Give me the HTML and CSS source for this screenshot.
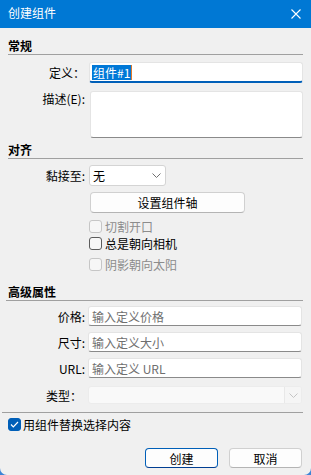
FILE: index.html
```html
<!DOCTYPE html>
<html lang="zh-CN">
<head>
<meta charset="utf-8">
<title>创建组件</title>
<link rel="stylesheet" href="styles.css">
</head>
<body>
<div class="window">
  <div class="titlebar">
    <span class="title">创建组件</span>
    <svg class="close" width="10" height="10" viewBox="0 0 10 10"><path d="M0.5 0.5 L9.5 9.5 M9.5 0.5 L0.5 9.5" stroke="#fff" stroke-width="1.1" fill="none"/></svg>
  </div>
  <div class="content">
    <h2 class="group-title g1">常规</h2>
    <div class="row m7">
      <label class="lbl">定义：</label>
      <div class="input focused h21"><span class="sel">组件#1</span><span class="caret"></span></div>
    </div>
    <div class="row m8 top">
      <label class="lbl lbl-top">描述(E):</label>
      <div class="input textarea"></div>
    </div>

    <h2 class="group-title g2">对齐</h2>
    <div class="row m6">
      <label class="lbl">黏接至:</label>
      <div class="select h21 w77"><span>无</span>
        <svg class="chev" width="9" height="5" viewBox="0 0 9 5"><path d="M0.5 0.5 L4.5 4.5 L8.5 0.5" stroke="#707070" fill="none"/></svg>
      </div>
    </div>
    <div class="row m6">
      <span></span>
      <button class="btn axis">设置组件轴</button>
    </div>
    <div class="checks">
      <div class="check disabled"><span class="box"></span><span>切割开口</span></div>
      <div class="check"><span class="box"></span><span>总是朝向相机</span></div>
      <div class="check disabled m4"><span class="box"></span><span>阴影朝向太阳</span></div>
    </div>

    <h2 class="group-title g3">高级属性</h2>
    <div class="row m5">
      <label class="lbl">价格:</label>
      <div class="input h20 adv"><span class="ph">输入定义价格</span></div>
    </div>
    <div class="row m6">
      <label class="lbl">尺寸:</label>
      <div class="input h20 adv"><span class="ph">输入定义大小</span></div>
    </div>
    <div class="row m6">
      <label class="lbl">URL:</label>
      <div class="input h20 adv"><span class="ph">输入定义 URL</span></div>
    </div>
    <div class="row m8">
      <label class="lbl lbl-type">类型：</label>
      <div class="select disabled-select adv">
        <span></span>
        <span class="arrow-box"><svg width="9" height="5" viewBox="0 0 9 5"><path d="M0.5 0.5 L4.5 4.5 L8.5 0.5" stroke="#c4c4c4" fill="none"/></svg></span>
      </div>
    </div>
    <div class="divider"></div>
    <div class="check checked replace"><span class="box"><svg width="9" height="7" viewBox="0 0 9 7"><path d="M1 3.5 L3.3 5.8 L8 1" stroke="#fff" stroke-width="1.2" fill="none"/></svg></span><span>用组件替换选择内容</span></div>
    <div class="actions">
      <button class="btn action primary">创建</button>
      <button class="btn action">取消</button>
    </div>
  </div>
</div>
</body>
</html>
```
FILE: styles.css
```css
html, body {
  margin: 0;
  padding: 0;
}
body {
  background: #3d84d6;
  font-family: "Noto Sans CJK SC", "Microsoft YaHei", sans-serif;
  font-size: 12px;
  color: #000;
}
.window {
  width: 311px;
  height: 475px;
  background: #f0f0f0;
  border-bottom-left-radius: 7px;
  border-bottom-right-radius: 7px;
  overflow: hidden;
  display: flex;
  flex-direction: column;
}
.titlebar {
  height: 28px;
  flex: none;
  background: #0078d4;
  color: #fff;
  display: flex;
  align-items: center;
  justify-content: space-between;
  padding: 0 10px 3px 8px;
  box-sizing: border-box;
  line-height: 16px;
}
.close {
  display: block;
  margin-top: 2px;
}
.content {
  padding: 0 8px;
  display: flex;
  flex-direction: column;
}
.group-title {
  margin: 0;
  font-size: 12px;
  font-weight: bold;
  line-height: 17px;
  height: 17px;
  border-bottom: 1px solid #a0a0a0;
}
.g1 { margin-top: 9px; }
.g2 { margin-top: 3px; }
.g3 { margin-top: 10px; margin-left: -2px; padding-left: 2px; }

.row {
  display: grid;
  grid-template-columns: 77px 1fr;
  column-gap: 4px;
  align-items: center;
}
.row.top { align-items: start; }
.m4 { margin-top: 4px; }
.m5 { margin-top: 5px; }
.m6 { margin-top: 6px; }
.m7 { margin-top: 7px; }
.m8 { margin-top: 8px; }

.lbl {
  text-align: right;
  line-height: 17px;
  white-space: nowrap;
}
.lbl-top { padding-top: 0; line-height: 16px; }
.lbl-type { padding-right: 3px; }

.input {
  background: #fff;
  border: 1px solid #e4e4e4;
  border-bottom-color: #8a8a8a;
  border-radius: 3px;
  box-sizing: border-box;
  display: flex;
  align-items: center;
  padding-left: 2px;
}
.h21 { height: 21px; }
.h20 { height: 20px; }
.adv { margin-left: -1px; margin-right: 1px; }
.input.focused {
  border-bottom: 2px solid #005fb8;
  padding-bottom: 0;
}
.sel {
  background: #0078d7;
  color: #fff;
  line-height: 15px;
  padding: 0 1px;
}
.caret {
  width: 1px;
  height: 15px;
  background: #e07a2c;
}
.textarea {
  height: 47px;
  margin-left: 1px;
}
.ph {
  color: #6f6f6f;
  padding-left: 1px;
  line-height: 17px;
}

.select {
  background: #fff;
  border: 1px solid #d4d4d4;
  border-radius: 3px;
  box-sizing: border-box;
  display: flex;
  align-items: center;
  justify-content: space-between;
  padding: 0 4px 0 3px;
  line-height: 17px;
}
.w77 { width: 77px; }
.chev { display: block; }
.disabled-select {
  height: 18px;
  background: #f9f9f9;
  border-color: #ececec;
  padding: 0;
  overflow: hidden;
}
.arrow-box {
  width: 16px;
  height: 100%;
  border-left: 1px solid #e8e8e8;
  background: #f5f5f5;
  display: flex;
  align-items: center;
  justify-content: center;
}
.arrow-box svg { display: block; }

.btn {
  font: inherit;
  color: #000;
  background: #fdfdfd;
  border: 1px solid #d0d0d0;
  border-bottom-color: #b4b4b4;
  border-radius: 4px;
  padding: 0;
  box-sizing: border-box;
  line-height: 17px;
}
.axis {
  width: 155px;
  height: 21px;
  margin-left: 1px;
}

.checks {
  margin-top: 5px;
  margin-left: 81px;
  display: flex;
  flex-direction: column;
}
.check {
  height: 17px;
  display: flex;
  align-items: center;
  gap: 3px;
  line-height: 17px;
}
.box {
  width: 13px;
  height: 13px;
  box-sizing: border-box;
  border: 1px solid #5c5c5c;
  border-radius: 3px;
  background: #f7f7f7;
  display: flex;
  align-items: center;
  justify-content: center;
  flex: none;
}
.check.disabled { color: #8c8c8c; }
.check.disabled .box {
  border-color: #c6c6c6;
  background: #f6f6f6;
}
.check.checked .box {
  background: #005fb8;
  border-color: #005fb8;
}
.box svg { display: block; }

.divider {
  margin: 8px 0 0 -6px;
  height: 1px;
  background: #a0a0a0;
}
.replace {
  margin-top: 3px;
  gap: 2px;
}

.actions {
  margin-top: 15px;
  display: flex;
  justify-content: flex-end;
  gap: 11px;
  padding-right: 1px;
}
.action {
  width: 73px;
  height: 20px;
}
.primary {
  border-color: #005fb8;
  border-bottom-color: #003e92;
}
```
